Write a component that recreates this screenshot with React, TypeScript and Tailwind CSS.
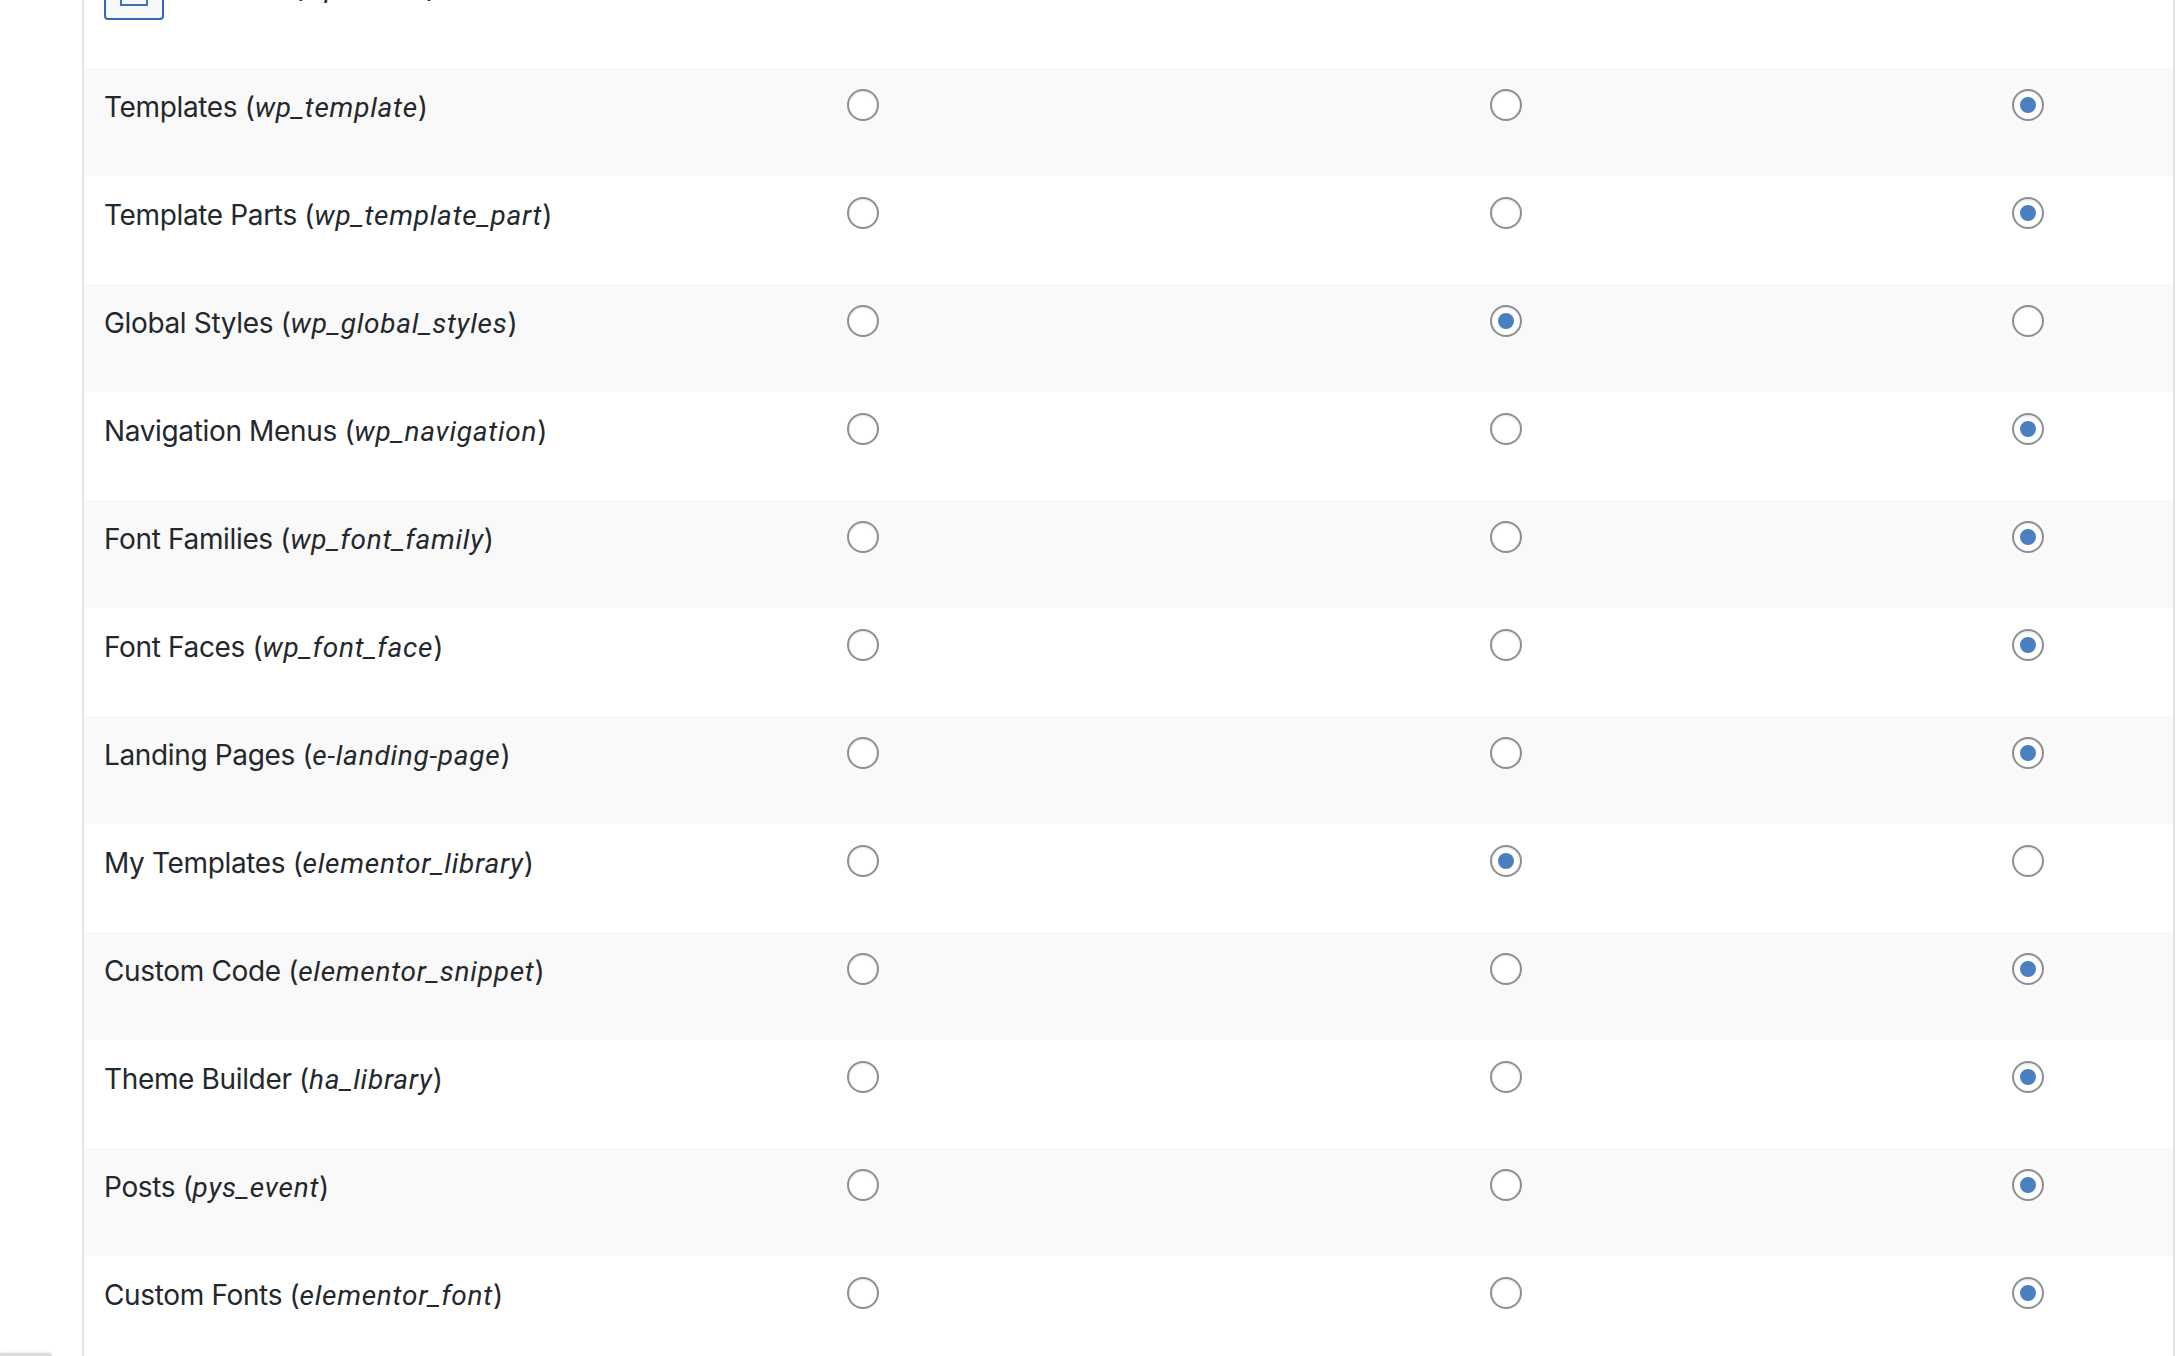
const rows: [string, string, number][] = [
  ["Templates", "wp_template", 2],
  ["Template Parts", "wp_template_part", 2],
  ["Global Styles", "wp_global_styles", 1],
  ["Navigation Menus", "wp_navigation", 2],
  ["Font Families", "wp_font_family", 2],
  ["Font Faces", "wp_font_face", 2],
  ["Landing Pages", "e-landing-page", 2],
  ["My Templates", "elementor_library", 1],
  ["Custom Code", "elementor_snippet", 2],
  ["Theme Builder", "ha_library", 2],
  ["Posts", "pys_event", 2],
  ["Custom Fonts", "elementor_font", 2],
];

function Radio({ on }: { on: boolean }) {
  return (
    <span className="w-8 h-8 rounded-full border-2 border-[#8c8f94] bg-white flex items-center justify-center shadow-[inset_0_1px_2px_rgba(0,0,0,0.1)]">
      {on && <span className="w-4 h-4 rounded-full bg-[#4a7fc1]" />}
    </span>
  );
}

export default function App() {
  return (
    <div className="w-[2184px] h-[1356px] overflow-hidden bg-white relative font-['Inter','Liberation_Sans',sans-serif]">
      <div className="absolute left-0 bottom-0 w-[52px] h-[3px] bg-[#dcdcdc] rounded-tr-[3px] shadow-[0_0_3px_rgba(0,0,0,0.15)]" />
      <div className="flex h-[1356px]">
        <div className="w-[84px] shrink-0 flex justify-end">
          <div className="w-[2px] h-full bg-[#e5e5e5]" />
        </div>
        <div className="w-[2089px] shrink-0">
          <div className="h-[108px] -mt-[40px] pl-5 pt-0 flex">
            <div className="w-[60px] h-[60px] rounded-[4px] border-2 border-[#2f6cb0] bg-[#f6f7f7] flex justify-center shrink-0">
              <span className="mt-[20px] w-7 h-[24px] border-2 border-[#3d72b4]" />
            </div>
            <div className="ml-[15px] mt-[8px] text-[28px] leading-[38px] text-[#23282d] tracking-[-0.35px]">
              Patterns (<i className="font-['Roboto',sans-serif] tracking-[1.2px]">wp_block</i>)
            </div>
          </div>
          {rows.map(([name, slug, sel], i) => (
            <div key={slug} className={`h-[108px] flex ${i % 2 === 0 ? "bg-[#f9f9f9]" : "bg-white"}`}>
              <div className="w-[763px] pl-5 pt-[20px] text-[28px] leading-[38px] text-[#23282d] tracking-[-0.35px]">
                {name} (<i className="font-['Roboto',sans-serif] tracking-[0.75px]">{slug}</i>)
              </div>
              <div className="w-[643px] pt-[21px]"><Radio on={sel === 0} /></div>
              <div className="w-[522px] pt-[21px]"><Radio on={sel === 1} /></div>
              <div className="pt-[21px]"><Radio on={sel === 2} /></div>
            </div>
          ))}
        </div>
        <div className="w-[2px] h-full bg-[#e5e5e5]" />
      </div>
    </div>
  );
}
